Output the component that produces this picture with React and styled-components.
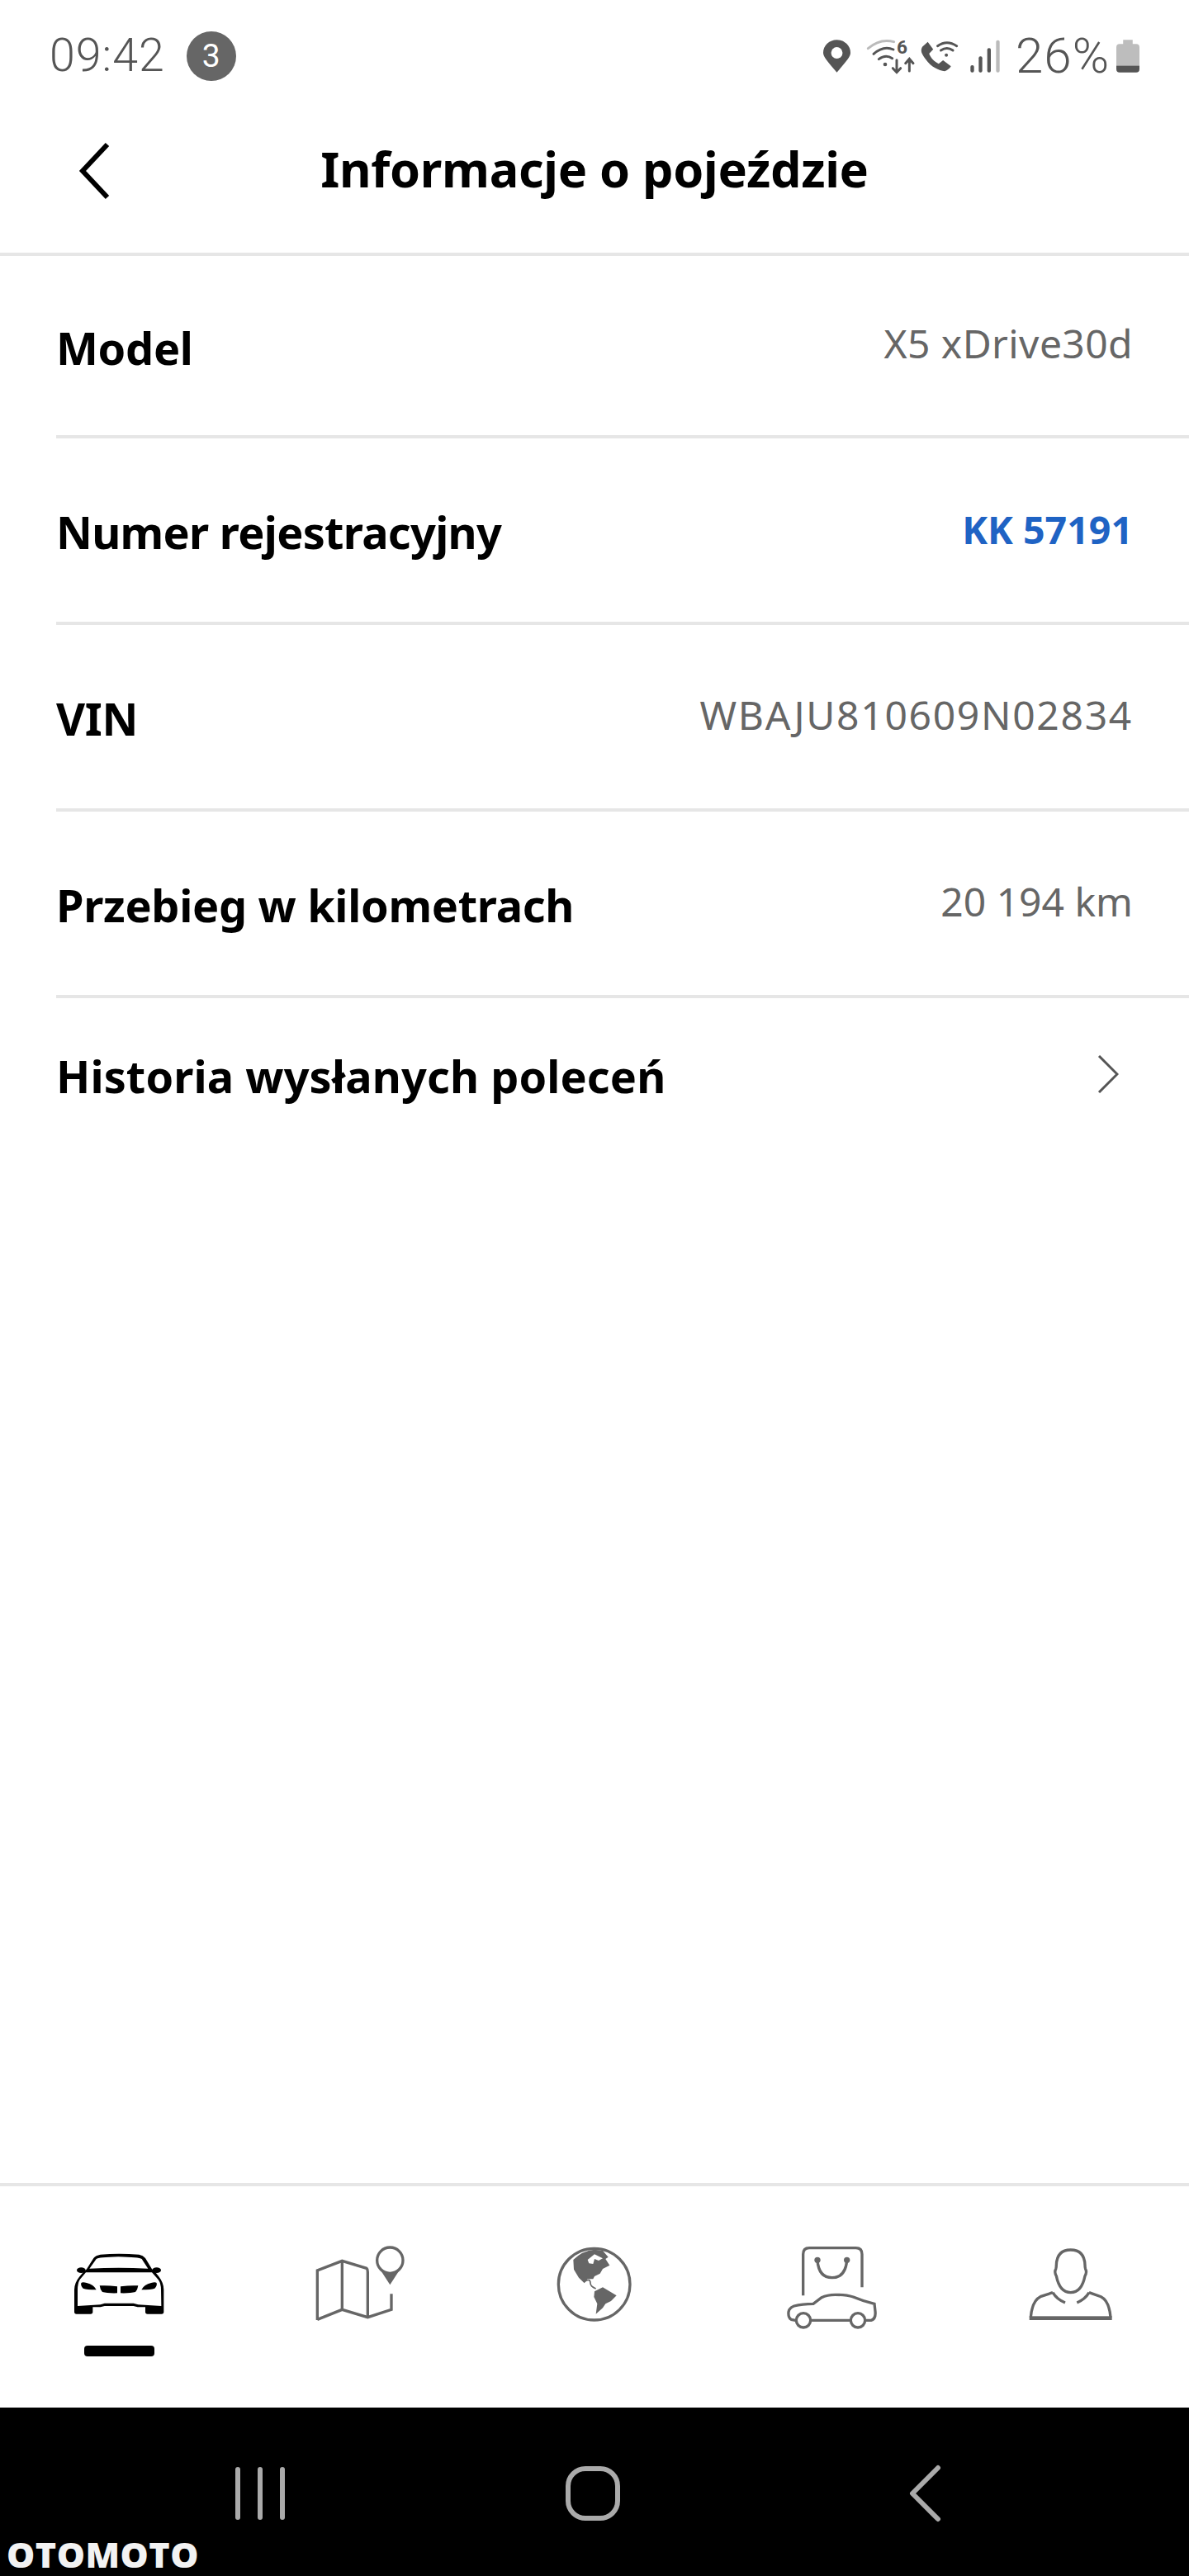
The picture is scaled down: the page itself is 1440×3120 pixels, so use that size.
import React from 'react';
import styled, { createGlobalStyle } from 'styled-components';

const GlobalStyle = createGlobalStyle`
  html, body { margin: 0; padding: 0; background: #fff; }
  * { box-sizing: border-box; }
`;

const Page = styled.div`
  width: 1440px;
  height: 3120px;
  display: flex;
  flex-direction: column;
  background: #fff;
  font-family: "Noto Sans", "Open Sans", sans-serif;
  position: relative;
`;

const StatusBar = styled.div`
  height: 136px;
  padding: 0 60px 0 60px;
  display: flex;
  align-items: center;
  justify-content: space-between;
  font-family: Roboto, "Liberation Sans", sans-serif;
  color: #555;
`;
const StatusGroup = styled.div`
  display: flex;
  align-items: center;
`;
const Clock = styled.span`
  font-size: 55.5px;
  font-weight: 300;
  line-height: 60px;
  letter-spacing: 1px;
`;
const Badge = styled.span`
  width: 60px;
  height: 60px;
  margin-left: 26px;
  border-radius: 50%;
  background: #666;
  color: #fff;
  display: flex;
  align-items: center;
  justify-content: center;
  font-size: 39px;
  font-weight: 400;
`;
const Battery = styled.span`
  font-size: 60px;
  font-weight: 300;
  line-height: 60px;
  margin-left: 19px;
  letter-spacing: 1px;
`;
const StatusIcon = styled.svg`
  display: block;
  flex: none;
  overflow: visible;
  margin-left: ${p => p.$gap || 0}px;
`;

const Header = styled.header`
  height: 174px;
  display: grid;
  grid-template-columns: 1fr auto 1fr;
  align-items: center;
  padding: 0 94px 28px 94px;
  border-bottom: 4px solid #e6e6e6;
`;
const Title = styled.h1`
  margin: 0 0 6px;
  font-size: 59.4px;
  font-weight: 700;
  color: #000;
  letter-spacing: -0.3px;
`;
const BackIcon = styled.svg`
  display: block;
`;

const List = styled.main`
  padding-left: 68px;
`;
const Row = styled.div`
  height: ${p => p.$height || 226}px;
  padding-right: ${p => p.$right || 68}px;
  display: flex;
  align-items: center;
  justify-content: space-between;
  border-bottom: ${p => (p.$last ? 'none' : '4px solid #e6e6e6')};
`;
const Label = styled.span`
  font-size: 54px;
  font-weight: 700;
  color: #000;
  letter-spacing: ${p => p.$tracking ?? -0.3}px;
  padding-top: 4px;
`;
const Value = styled.span`
  font-size: ${p => (p.$link ? 46.5 : 48)}px;
  font-weight: ${p => (p.$link ? 700 : 400)};
  color: ${p => (p.$link ? '#1f63c4' : '#666')};
  letter-spacing: ${p => p.$tracking || 0}px;
  margin-bottom: ${p => (p.$link ? 2 : 6)}px;
`;
const RowChevron = styled.svg`
  display: block;
`;

const Spacer = styled.div`
  flex: 1;
`;

const TabBar = styled.nav`
  height: 272px;
  border-top: 4px solid #e6e6e6;
  padding-top: 64px;
  display: grid;
  grid-template-columns: repeat(5, 1fr);
`;
const Tab = styled.div`
  display: flex;
  flex-direction: column;
  align-items: center;
`;
const TabIcon = styled.svg`
  display: block;
  color: ${p => (p.$active ? '#000' : '#666')};
`;
const ActiveBar = styled.span`
  width: 85px;
  height: 13px;
  margin-top: 19px;
  border-radius: 4px;
  background: #000;
`;

const SystemNav = styled.div`
  height: 204px;
  background: #000;
  padding: 4px 0 0 114px;
  display: grid;
  grid-template-columns: repeat(3, 402.5px);
  align-items: center;
  justify-items: center;
`;
const NavBars = styled.div`
  display: flex;
  gap: 21px;
`;
const NavBarLine = styled.span`
  width: 6px;
  height: 64px;
  border-radius: 3px;
  background: #aaa;
`;
const NavHome = styled.span`
  width: 66px;
  height: 66px;
  border: 6px solid #aaa;
  border-radius: 24px;
`;
const Watermark = styled.div`
  position: absolute;
  left: 8px;
  top: 3074px;
  font-family: "Open Sans", sans-serif;
  font-size: 43px;
  line-height: 40px;
  font-weight: 800;
  letter-spacing: 0.5px;
  color: #f2f2f2;
`;

const rows = [
  { label: 'Model', value: 'X5 xDrive30d', height: 221, tracking: 0.4 },
  { label: 'Numer rejestracyjny', value: 'KK 57191', link: true, labelTracking: -0.7 },
  { label: 'VIN', value: 'WBAJU810609N02834', tracking: 1.7 },
  { label: 'Przebieg w kilometrach', value: '20 194 km' },
];

const Pin = () => (
  <StatusIcon width="33" height="40" viewBox="110 87 100 120" $gap={0}>
    <path d="M160 207C125 165 110 150 110 135A50 48 0 1 1 210 135C210 150 195 165 160 207Z" fill="#555" />
    <circle cx="160" cy="135" r="21" fill="#fff" />
  </StatusIcon>
);

const WifiData = () => (
  <StatusIcon width="57" height="43" viewBox="270 85 171 129" $gap={20}>
    <g fill="none" strokeLinecap="round" strokeWidth="9">
      <path d="M274 120Q318 82 368 96" stroke="#bbb" />
      <path d="M294 140Q330 108 366 124" stroke="#555" />
      <path d="M313 159Q338 140 362 156" stroke="#555" />
      <path d="M378 162V205M364 192L378 207L392 192M424 202V160M410 174L424 158L438 174" stroke="#555" />
    </g>
    <circle cx="336" cy="178" r="7" fill="#555" />
    <text x="378" y="140" fontSize="68" fontWeight="700" fontFamily="Roboto, sans-serif" fill="#555">6</text>
  </StatusIcon>
);

const WifiCall = () => (
  <StatusIcon width="45" height="38" viewBox="464 92 136 114" $gap={8}>
    <path d="M490 97L470 115C462 130 468 140 480 157C505 192 530 200 552 204C562 200 570 195 575 186L546 164L530 177C512 168 502 156 495 140L510 124Z" fill="#555" />
    <g fill="none" stroke="#555" strokeWidth="9" strokeLinecap="round">
      <path d="M526 112Q560 88 596 112" />
      <path d="M538 128Q560 112 582 128" />
    </g>
    <circle cx="558" cy="145" r="6" fill="#555" />
  </StatusIcon>
);

const Signal = () => (
  <StatusIcon width="36" height="40" viewBox="644 87 108 120" $gap={15}>
    <rect x="645" y="180" width="13" height="26" rx="6" fill="#555" />
    <rect x="675" y="148" width="13" height="58" rx="6" fill="#555" />
    <rect x="706" y="118" width="13" height="88" rx="6" fill="#555" />
    <rect x="738" y="89" width="13" height="117" rx="6" fill="#bbb" />
  </StatusIcon>
);

const BatteryIcon = () => (
  <StatusIcon width="28" height="40" viewBox="1175 85 85 120" $gap={8}>
    <path d="M1200 85H1235V100H1248Q1260 100 1260 112V180H1175V112Q1175 100 1187 100H1200Z" fill="#bdbdbd" />
    <path d="M1175 180H1260V193Q1260 205 1248 205H1187Q1175 205 1175 193Z" fill="#555" />
  </StatusIcon>
);

const CarIcon = () => (
  <TabIcon $active width="130" height="110" viewBox="-3 -9 390 330">
    <ellipse cx="55" cy="104" rx="16" ry="10" fill="currentColor" />
    <ellipse cx="329" cy="104" rx="16" ry="10" fill="currentColor" />
    <path d="M30 255V175Q30 150 48 128L62 112L75 100L100 60Q108 50 125 47Q190 42 265 47Q280 50 288 60L312 100L325 112L338 128Q355 150 355 175V255Q355 263 347 263H296Q288 263 288 255V238H260L245 234H140L125 238H97V255Q97 263 89 263H38Q30 263 30 255Z" fill="currentColor" />
    <path d="M85 98L110 63Q118 57 190 55Q265 57 275 63L298 98Q190 92 85 98Z" fill="#fff" />
    <path d="M72 112H312L335 138Q345 152 345 175L346 234L262 229L245 224H140L125 229L42 234L42 175Q42 152 50 138Z" fill="#fff" />
    <path d="M55 150Q60 145 75 150Q100 155 110 175Q75 175 62 170Q52 160 55 150Z" fill="currentColor" />
    <path d="M329 150Q324 145 309 150Q284 155 274 175Q309 175 322 170Q332 160 329 150Z" fill="currentColor" />
    <path d="M122 160Q150 158 186 163V187Q150 188 132 183Q124 175 122 160Z" fill="currentColor" />
    <path d="M262 160Q234 158 198 163V187Q234 188 252 183Q260 175 262 160Z" fill="currentColor" />
  </TabIcon>
);

const MapIcon = () => (
  <TabIcon width="130" height="110" viewBox="-9 6 390 330">
    <g fill="none" stroke="currentColor" strokeWidth="10">
      <path d="M43 300V120L133 85L222 112Q226 115 226 125V290" />
      <path d="M43 298L133 262L226 290L312 262V205" />
      <path d="M133 85V262" />
      <circle cx="307" cy="83" r="47" />
    </g>
    <path d="M272 118L307 172L342 118Q307 142 272 118Z" fill="currentColor" />
  </TabIcon>
);

const GlobeIcon = () => (
  <TabIcon width="130" height="110" viewBox="-30 0 390 330">
    <circle cx="164" cy="164" r="130" fill="none" stroke="currentColor" strokeWidth="10" />
    <path d="M88 75Q120 42 165 38L195 42L215 65L205 72L220 95L195 108L185 125L165 135L160 145L140 145L128 160L108 140L90 110Z" fill="currentColor" />
    <path d="M140 75L165 55L195 70L180 78L165 72L160 90L145 88Z" fill="#fff" />
    <path d="M128 155Q150 140 150 160Q150 172 170 180" fill="none" stroke="currentColor" strokeWidth="5" />
    <path d="M165 190L195 175L220 190L245 205L225 225L205 235L195 250L170 272L175 235L163 210Z" fill="currentColor" />
  </TabIcon>
);

const ShopIcon = () => (
  <TabIcon width="130" height="110" viewBox="-6 0 390 330">
    <g fill="none" stroke="currentColor" strokeWidth="10">
      <path d="M83 205V55Q83 32 105 32H275Q297 32 297 55V175" />
      <path d="M135 78Q140 140 188 140Q236 140 242 78" />
      <path d="M55 295L40 292Q28 285 30 265Q32 250 50 243Q80 235 120 235L150 212Q170 202 200 202Q240 202 265 210Q300 225 342 235L345 262Q348 290 330 295H312M112 295H254" />
      <circle cx="84" cy="295" r="26" />
      <circle cx="282" cy="295" r="26" />
    </g>
    <circle cx="135" cy="76" r="11" fill="currentColor" />
    <circle cx="242" cy="76" r="11" fill="currentColor" />
  </TabIcon>
);

const PersonIcon = () => (
  <TabIcon width="130" height="110" viewBox="-17 -9 390 330">
    <g fill="none" stroke="currentColor" strokeWidth="10">
      <path d="M180 30Q130 30 128 85Q128 95 126 100Q120 110 128 125Q140 185 180 185Q220 185 232 125Q240 110 234 100Q232 95 232 85Q230 30 180 30Z" />
      <path d="M115 185L70 200Q40 215 35 275M247 185L290 200Q320 215 325 275" />
      <path d="M115 185Q130 210 160 222M247 185Q232 210 203 222" />
    </g>
    <rect x="30" y="271" width="300" height="14" fill="currentColor" />
  </TabIcon>
);

export default function App() {
  return (
    <Page>
      <GlobalStyle />
      <StatusBar>
        <StatusGroup>
          <Clock>09:42</Clock>
          <Badge>3</Badge>
        </StatusGroup>
        <StatusGroup>
          <Pin />
          <WifiData />
          <WifiCall />
          <Signal />
          <Battery>26%</Battery>
          <BatteryIcon />
        </StatusGroup>
      </StatusBar>
      <Header>
        <BackIcon width="40" height="70" viewBox="0 0 40 70">
          <path d="M36 3L6 35L36 67" fill="none" stroke="#000" strokeWidth="6" />
        </BackIcon>
        <Title>Informacje o pojeździe</Title>
      </Header>
      <List>
        {rows.map(r => (
          <Row key={r.label} $height={r.height}>
            <Label $tracking={r.labelTracking}>{r.label}</Label>
            <Value $link={r.link} $tracking={r.tracking}>{r.value}</Value>
          </Row>
        ))}
        <Row $last $height={184} $right={85}>
          <Label $tracking={0.1}>Historia wysłanych poleceń</Label>
          <RowChevron width="26" height="46" viewBox="0 0 26 46">
            <path d="M2 1L24 23L2 45" fill="none" stroke="#555" strokeWidth="3" />
          </RowChevron>
        </Row>
      </List>
      <Spacer />
      <TabBar>
        <Tab>
          <CarIcon />
          <ActiveBar />
        </Tab>
        <Tab><MapIcon /></Tab>
        <Tab><GlobeIcon /></Tab>
        <Tab><ShopIcon /></Tab>
        <Tab><PersonIcon /></Tab>
      </TabBar>
      <SystemNav>
        <NavBars>
          <NavBarLine />
          <NavBarLine />
          <NavBarLine />
        </NavBars>
        <NavHome />
        <svg width="40" height="70" viewBox="0 0 40 70">
          <path d="M36 4L5 35L36 66" fill="none" stroke="#aaa" strokeWidth="6" strokeLinecap="round" strokeLinejoin="round" />
        </svg>
      </SystemNav>
      <Watermark>OTOMOTO</Watermark>
    </Page>
  );
}
